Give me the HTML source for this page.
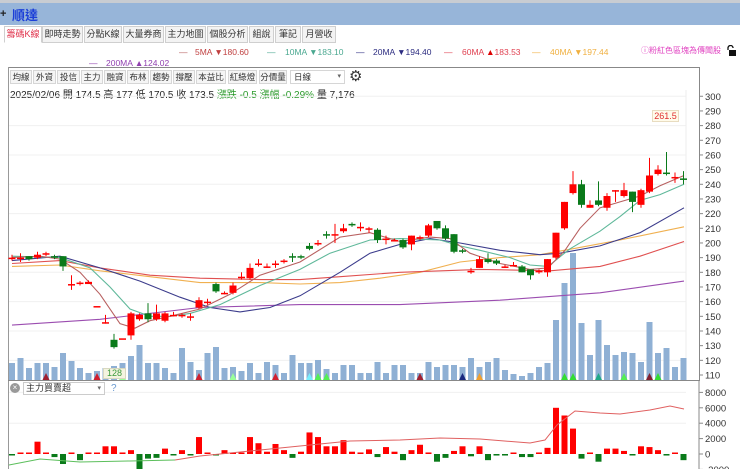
<!DOCTYPE html>
<html><head><meta charset="utf-8">
<style>
*{margin:0;padding:0;box-sizing:border-box}
body{width:740px;height:469px;overflow:hidden;background:#fff;font-family:"Liberation Sans","Noto Sans CJK TC",sans-serif;position:relative}
.abs{position:absolute}
#top{left:0;top:0;width:740px;height:3px;background:#c8ccd2}
#bar{left:0;top:3px;width:740px;height:22px;background:#97b5d9}
#title{left:12px;top:5px;font-size:13px;font-weight:bold;color:#1c3fd8}
.tab{position:absolute;top:26px;height:17px;border:1px solid #cfcfcf;background:#f3f3f3;font-size:9px;color:#333;text-align:center;line-height:15px;white-space:nowrap;overflow:hidden}
.btn{position:absolute;top:70px;height:14px;border:1px solid #d6d6d6;background:#f5f5f5;font-size:8.5px;color:#333;text-align:center;line-height:12px;white-space:nowrap;overflow:hidden}
.leg{position:absolute;font-size:8.5px;white-space:nowrap}
</style></head><body>
<div class="abs" id="top"></div>
<div class="abs" id="bar"></div>
<div class="abs" style="left:0;top:8px;font-size:11px;font-weight:bold;color:#222">+</div>
<div class="abs" id="title">順達</div>
<div class="tab" style="left:4px;width:38px;background:#fff;color:#e0304a;border-bottom-color:#fff">籌碼K線</div>
<div class="tab" style="left:42px;width:41px">即時走勢</div>
<div class="tab" style="left:84px;width:38px">分點K線</div>
<div class="tab" style="left:123px;width:41px">大量券商</div>
<div class="tab" style="left:165px;width:41px">主力地圖</div>
<div class="tab" style="left:207px;width:41px">個股分析</div>
<div class="tab" style="left:249px;width:25px">組說</div>
<div class="tab" style="left:275px;width:26px">筆記</div>
<div class="tab" style="left:302px;width:34px">月營收</div>

<div class="leg" style="left:179px;top:47px;color:#b86060">—</div><div class="leg" style="left:195px;top:47px;color:#c04040">5MA ▼180.60</div>
<div class="leg" style="left:267px;top:47px;color:#4aa890">—</div><div class="leg" style="left:285px;top:47px;color:#4aa890">10MA ▼183.10</div>
<div class="leg" style="left:356px;top:47px;color:#2c2c80">—</div><div class="leg" style="left:373px;top:47px;color:#2c2c80">20MA ▼194.40</div>
<div class="leg" style="left:444px;top:47px;color:#e04050">—</div><div class="leg" style="left:462px;top:47px;color:#e04050">60MA <span style="color:#d00">▲</span>183.53</div>
<div class="leg" style="left:532px;top:47px;color:#f0b040">—</div><div class="leg" style="left:550px;top:47px;color:#f0b040">40MA ▼197.44</div>
<div class="leg" style="left:89px;top:58px;color:#9040b0">—</div><div class="leg" style="left:106px;top:58px;color:#9040b0">200MA ▲124.02</div>
<div class="leg" style="left:641px;top:45px;color:#e040c0;font-size:8px">ⓘ粉紅色區塊為傳聞股</div>
<svg class="abs" style="left:725px;top:45px" width="12" height="12"><path d="M3 5V3a2.5 2.5 0 0 1 5 0" fill="none" stroke="#111" stroke-width="1.3"/><rect x="4" y="5" width="7" height="6" fill="#111"/></svg>

<div class="abs" style="left:8px;top:67px;width:692px;height:1px;background:#888"></div>
<div class="abs" style="left:8px;top:67px;width:1px;height:402px;background:#999"></div>
<div class="abs" style="left:699px;top:67px;width:1px;height:314px;background:#888"></div>

<div class="btn" style="left:10px;width:22px">均線</div>
<div class="btn" style="left:33px;width:23px">外資</div>
<div class="btn" style="left:57px;width:23px">投信</div>
<div class="btn" style="left:81px;width:22px">主力</div>
<div class="btn" style="left:104px;width:22px">融資</div>
<div class="btn" style="left:127px;width:22px">布林</div>
<div class="btn" style="left:150px;width:22px">趨勢</div>
<div class="btn" style="left:173px;width:22px">撐壓</div>
<div class="btn" style="left:196px;width:30px">本益比</div>
<div class="btn" style="left:228px;width:29px">紅綠燈</div>
<div class="btn" style="left:259px;width:28px">分價量</div>
<div class="btn" style="left:290px;width:55px;background:#fff;text-align:left;padding-left:3px">日線<span style="position:absolute;right:3px;font-size:7px;color:#666">▾</span></div>
<div class="abs" style="left:349px;top:67px;font-size:15px;color:#333">⚙</div>
<div class="abs" style="left:10px;top:86px;font-size:10px;color:#222;white-space:nowrap">2025/02/06 開 174.5 高 177 低 170.5 收 173.5 <span style="color:#2a9a2a">漲跌 -0.5 漲幅 -0.29%</span> 量 7,176</div>

<svg id="c" class="abs" style="left:0;top:0" width="740" height="469"></svg>

<div class="abs" style="left:652px;top:110px;width:27px;height:12px;border:1px solid #e8dcc0;background:#fffbea;font-size:9px;color:#e03030;text-align:center;line-height:10px">261.5</div>
<div class="abs" style="left:103px;top:368px;width:23px;height:11px;border:1px solid #d8d8c0;background:#f4f4e0;font-size:9px;color:#3a9a3a;text-align:center;line-height:9px">128</div>

<div class="abs" style="left:10px;top:383px;width:10px;height:10px;border-radius:50%;background:#999;color:#fff;font-size:8px;line-height:10px;text-align:center">×</div>
<div class="abs" style="left:23px;top:382px;width:82px;height:13px;border:1px solid #ccc;background:#fff;font-size:9px;color:#333;line-height:11px;padding-left:2px;white-space:nowrap">主力買賣超<span style="position:absolute;right:3px;font-size:7px;color:#666">▾</span></div>
<div class="abs" style="left:111px;top:383px;font-size:10px;color:#6a9ad0">?</div>

<script>
var s=document.getElementById('c'),h='';
function Y(p){return 375-(p-110)*1.467}
for(var p=120;p<=300;p+=20){h+='<line x1="9" x2="686" y1="'+Y(p)+'" y2="'+Y(p)+'" stroke="#f0f0f0"/>';}
for(var p=110;p<=300;p+=10){var y=Y(p);h+='<line x1="699" x2="703" y1="'+y+'" y2="'+y+'" stroke="#888"/><text x="705" y="'+(y+3.5)+'" font-size="9.5" fill="#333">'+p+'</text>';}
h+='<line x1="686" x2="686" y1="90" y2="380" stroke="#eee"/>';
h+='<line x1="8" x2="700" y1="380.5" y2="380.5" stroke="#888"/>';
function X(i){return 12+i*8.5}
var vals=[363,358,368,363,363,367,353,361,368,373,371,368,366,363,356,345,363,363,368,373,348,362,370,353,347,368,367,371,363,373,362,365,373,355,363,363,360,369,373,365,365,373,373,362,
373,365,365,373,373,362,367,365,365,367,358,367,362,358,370,374,376,373,367,363,320,283,253,323,355,320,345,355,352,353,362,322,353,348,367,358];
for(var i=0;i<80;i++){h+='<rect x="'+(X(i)-3)+'" y="'+vals[i]+'" width="6" height="'+(380-vals[i])+'" fill="#8fb0d4"/>';}
var tri=[[4,'#a02030'],[10,'#d02030'],[13,'#9f9'],[31,'#d02030'],[36,'#5e5'],[37,'#5e5'],[48,'#a02030'],[55,'#f0a030'],[22,'#d02030'],[26,'#9f9'],[35,'#7ef'],[53,'#1a2a80'],[65,'#3d3'],[66,'#3d3'],[69,'#2a8'],[72,'#5e5'],[75,'#802030'],[76,'#3d3']];
tri.forEach(function(t){var x=X(t[0]);h+='<path d="M'+(x-3.5)+' 380L'+x+' 373L'+(x+3.5)+' 380Z" fill="'+t[1]+'"/>';});
function L(pts,c){var d='';pts.forEach(function(q,i){d+=(i?'L':'M')+q[0]+' '+Y(q[1]).toFixed(1)});h+='<path d="'+d+'" fill="none" stroke="'+c+'" stroke-width="1.1"/>';}
L([[12,144],[100,148],[200,156],[300,158],[400,158],[500,161],[600,166],[684,174]],'#9b4db0');
L([[12,184],[60,185],[100,181],[150,177],[200,173],[260,173],[300,172],[340,173],[380,176],[420,180],[460,187],[500,190],[540,192],[580,197],[620,202],[684,211]],'#f0b050');
L([[12,186],[60,188],[100,183],[150,178],[200,176],[260,175],[300,175],[340,177],[400,180],[480,182],[550,181],[600,184],[640,191],[684,201]],'#e05050');
L([[12,188],[60,191],[100,183],[140,174],[180,163],[210,156],[240,153],[270,156],[300,164],[340,180],[370,193],[400,199],[430,203],[460,200],[500,195],[540,192],[560,193],[600,198],[640,207],[684,224]],'#3c3c8c');
L([[12,191],[60,190],[90,183],[110,170],[130,155],[150,150],[170,150],[190,152],[220,158],[260,171],[300,182],[330,193],[370,202],[400,203],[440,202],[460,198],[480,195],[510,190],[530,185],[548,184],[570,196],[600,208],[620,218],[640,229],[660,233],[684,240]],'#5fb89a');
L([[12,190],[40,191],[60,189],[80,180],[100,165],[120,145],[135,142],[150,147],[170,150],[200,155],[230,165],[260,178],[300,187],[340,204],[370,207],[400,201],[430,204],[450,203],[470,193],[500,186],[530,182],[548,183],[565,195],[580,210],[600,224],[620,228],[640,232],[660,239],[684,246]],'#b86060');
var K=[[190,190,192,188],[189,190,193,187],[191,189,191,188],[190,192,194,189],[192,193,194,191],[191,190,192,189],[191,184,191,181],[172,172,178,168],[172,173,174,171],[172,173.5,174.5,172],[157,157,157,157],[146,146,151,145],[134,129,138,128],[135,135,135,135],[137,152,153,134],[148,151,152,147],[152,148,159,146],[148,152,158,147],[147,152,153,146],[151,151,153,150],[150,151,152,149],[150,150,152,147],[156,161,163,155],[159,160,162,158],[172,167,173,166],[166,166,167,165],[166,171,173,165],[176,177,180,175],[176,183,186,175],[185,186,189,184],[183,184,186,183],[185,186,188,183],[187,188,189,186],[191,190,193,187],[191,190,192,189],[198,196,200,195],[199,200,202,198],[206,205,208,203],[206,206,213,200],[208,210,213,207],[213,212,214,211],[211,211,214,208],[209,210,211,207],[209,202,210,200],[203,203,205,199],[202,202,203,201],[202,197,203,196],[199,205,205,195],[204,204,205,202],[205,212,213,204],[215,210,215,209],[210,203,212,202],[206,194,206,193],[195,194,196,193],[180,181,183,179],[183,189,191,183],[189,187,193,186],[188,186,189,185],[184,184,185,183],[185,185,187,184],[184,180,185,180],[182,178,182,175],[181,181,182,179],[180,189,189,177],[190,207,207,189],[210,228,228,209],[234,240,249,233],[240,226,243,224],[224,226,229,224],[229,226,242,225],[224,232,234,222],[235,236,236,228],[232,236,241,231],[235,228,235,221],[226,236,237,224],[235,246,258,234],[247,250,253,246],[248,247,262,246],[245,245,248,241],[244,243,249,240]];
K.forEach(function(k,i){var x=X(i),up=k[1]>=k[0],c=up?'#f00':'#0a7a1a';var t=Y(Math.max(k[0],k[1])),b=Y(Math.min(k[0],k[1]));if(b-t<1.5){b=t+1.5;}
h+='<line x1="'+x+'" x2="'+x+'" y1="'+Y(k[2])+'" y2="'+Y(k[3])+'" stroke="'+c+'"/>';
h+='<rect x="'+(x-3.5)+'" y="'+t+'" width="7" height="'+(b-t)+'" fill="'+c+'"/>';});
function B(v){return 454-v*7.7}
[8000,6000,4000,2000,0,-2000].forEach(function(v){var y=B(v/1000);h+='<line x1="699" x2="703" y1="'+y+'" y2="'+y+'" stroke="#888"/><text x="705" y="'+(y+3.5)+'" font-size="9.5" fill="#333">'+v+'</text>';});
h+='<line x1="9" x2="686" y1="'+B(4)+'" y2="'+B(4)+'" stroke="#f0f0f0"/><line x1="9" x2="686" y1="'+B(8)+'" y2="'+B(8)+'" stroke="#f0f0f0"/>';
h+='<line x1="699" x2="699" y1="381" y2="469" stroke="#888"/>';
var bv=[-0.1,0.1,0.1,1.6,0.1,-0.4,-1.3,0.1,-0.8,0.1,0.1,1.0,1.0,0.2,0.5,-3.0,-0.6,-0.5,0.7,-0.1,0.5,-0.1,2.2,0.1,-0.1,0.5,0.1,0.1,2.2,1.4,0.3,1.3,0.5,-0.5,0.3,2.8,2.2,1.0,1.0,1.8,0.3,0.2,0.6,-0.4,0.9,0.3,-0.8,0.5,1.2,0.2,-1.0,-0.5,0.4,1.0,-0.3,1.0,-0.8,-0.2,-0.2,0.05,-0.4,-0.4,0.2,0.8,6.0,5.0,3.3,-0.6,0.1,-1.0,0.7,0.7,0.4,-0.1,1.0,0.9,0.5,-0.2,0.1,-0.8];
bv.forEach(function(v,i){var x=X(i),c=v>=0?'#f00':'#0a7a1a';var hh=Math.max(Math.abs(v)*7.7,1.5);var y=v>=0?454-hh:454;h+='<rect x="'+(x-3)+'" y="'+y+'" width="6" height="'+hh+'" fill="'+c+'"/>';});
var rl=[[9,465],[40,459],[80,462],[130,461],[175,460]];var rl2=[[175,460],[200,456],[250,451],[300,446],[350,441],[400,440],[440,438],[480,439],[530,443],[545,440],[557,425],[575,411],[600,413],[620,414],[650,410],[670,406],[684,409]];
function P(a,c){var d='';a.forEach(function(q,i){d+=(i?'L':'M')+q[0]+' '+q[1]});h+='<path d="'+d+'" fill="none" stroke="'+c+'" stroke-width="1"/>';}
P(rl,'#5cbf5c');P(rl2,'#e06060');
s.innerHTML=h;
</script>
</body></html>
